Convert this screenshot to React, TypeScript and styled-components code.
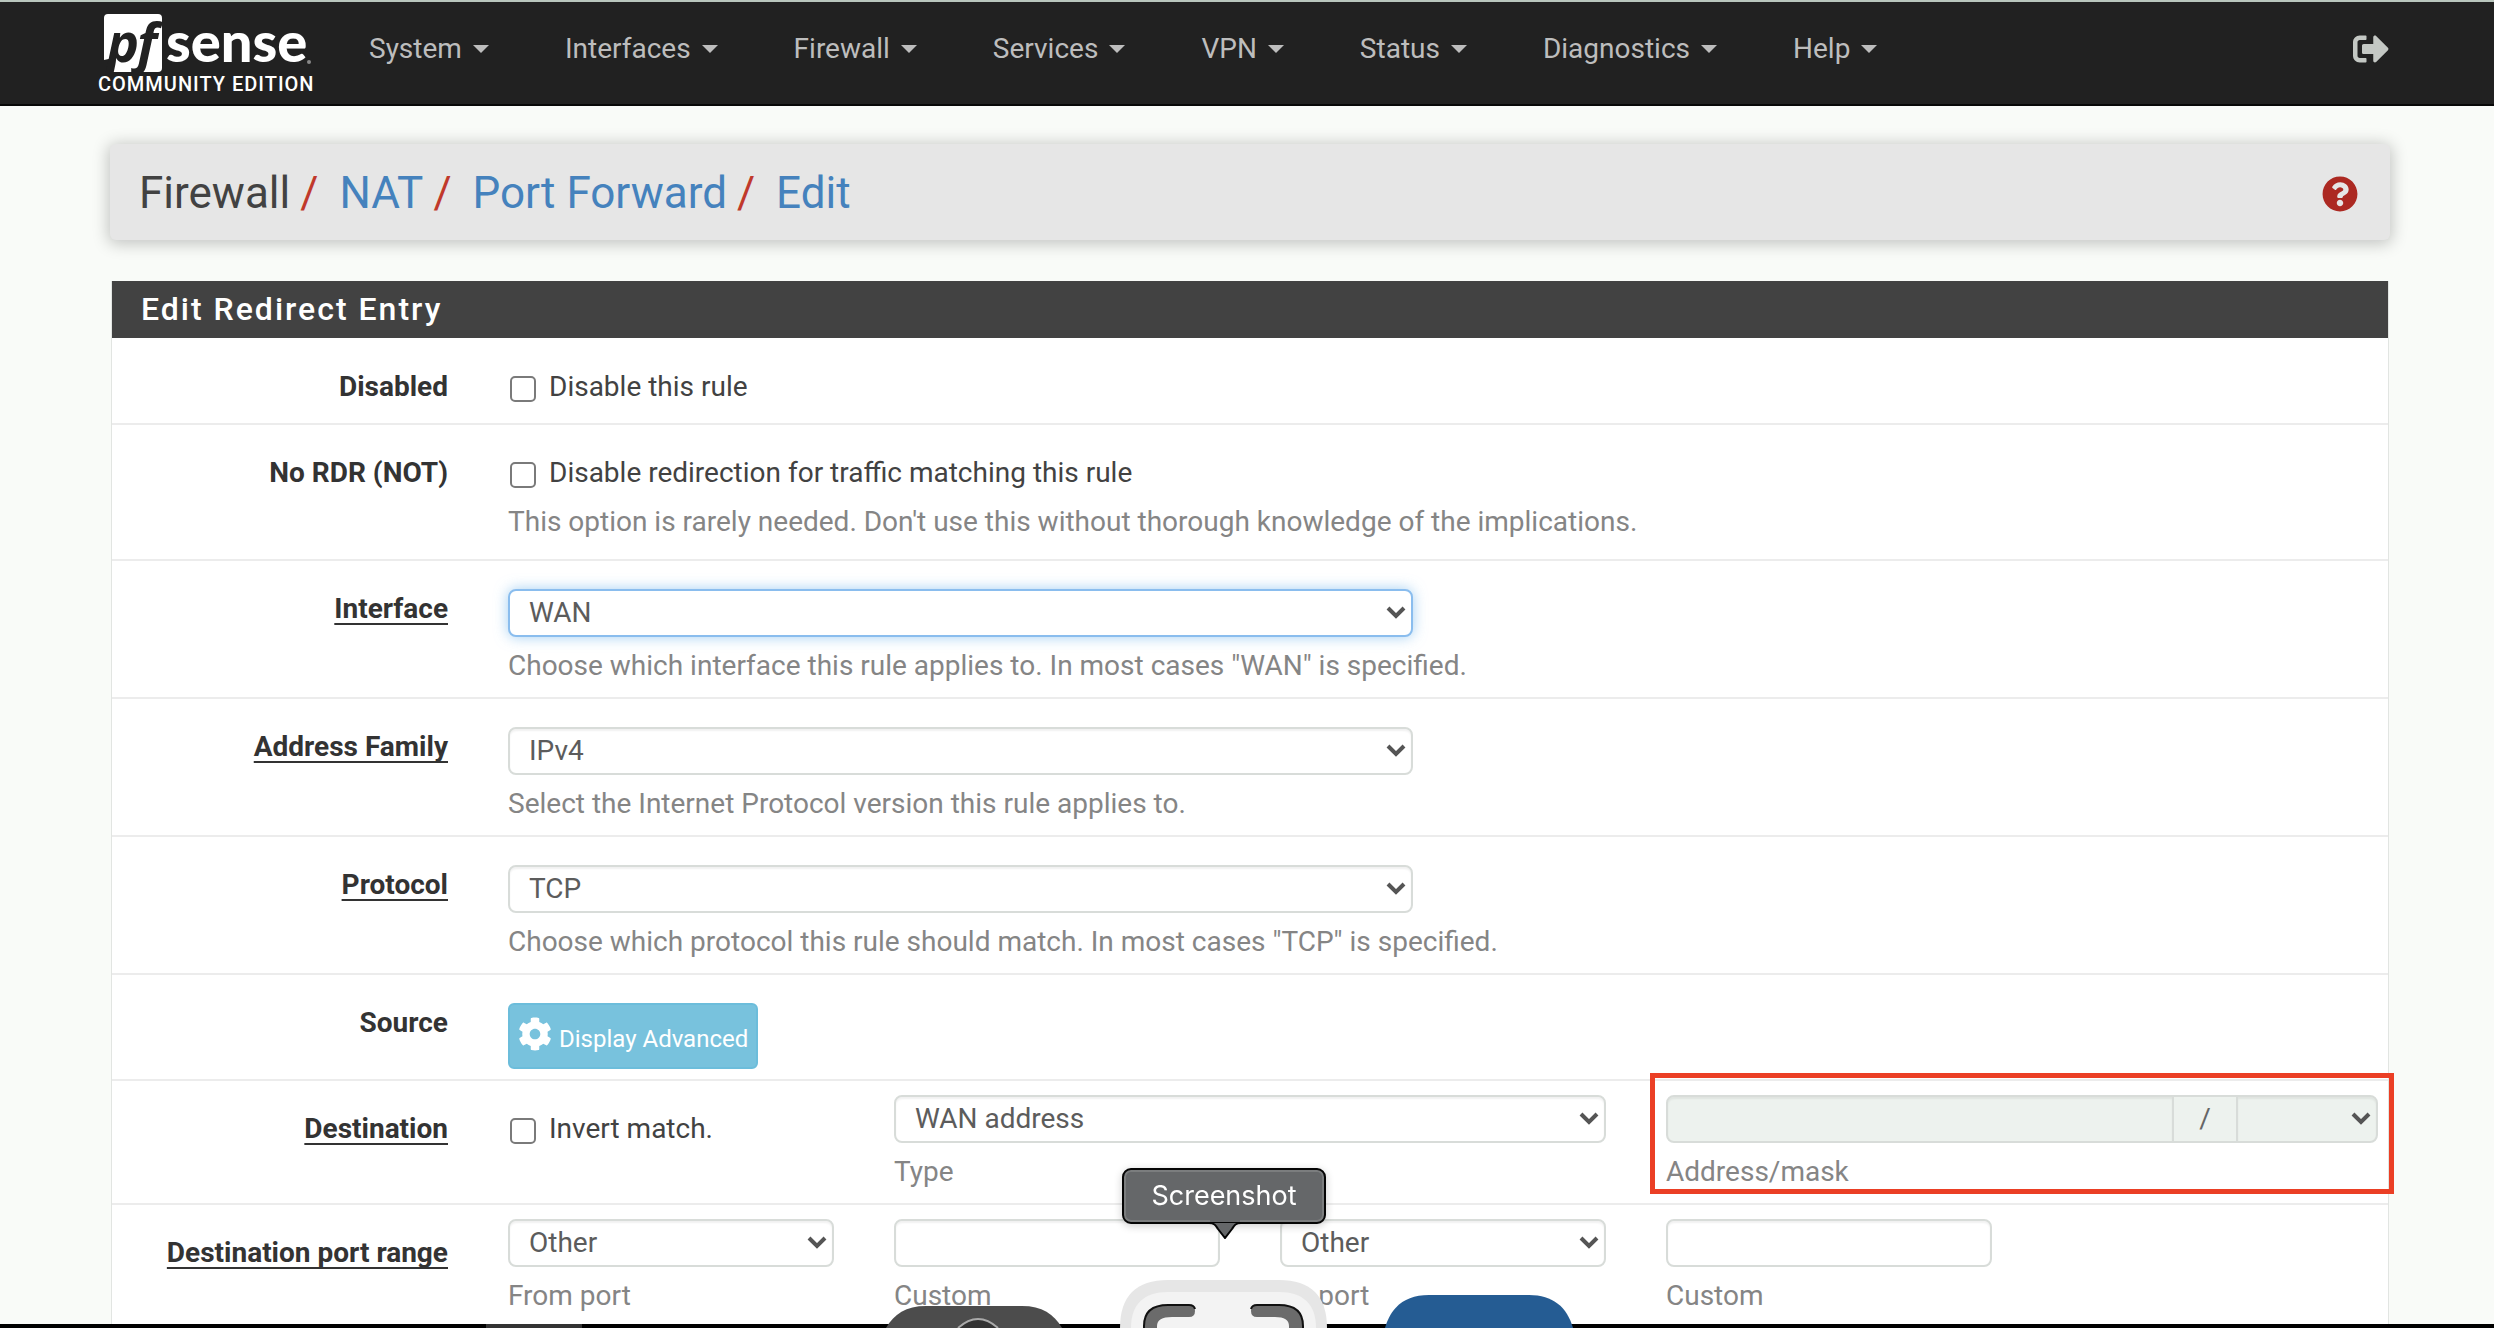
import React, { useId } from 'react';
import styled, { createGlobalStyle, css } from 'styled-components';
import { FaCog, FaQuestionCircle, FaSignOutAlt } from 'react-icons/fa';

const GlobalStyle = createGlobalStyle`
  * { box-sizing: border-box; }
  body {
    margin: 0;
    background: #f9fbf8;
    color: #424242;
    font-family: Roboto, "Liberation Sans", sans-serif;
    font-size: 28px;
    line-height: 40px;
  }
  button, input, select { font: inherit; color: inherit; }
`;

const Page = styled.div`
  height: 100vh;
  overflow: hidden;
`;

const Navbar = styled.nav`
  display: flex;
  height: 106px;
  padding: 0 105px 0 98px;
  border-top: 2px solid #b9c6bd;
  border-bottom: 2px solid #080808;
  background: #212121;
`;

const Brand = styled.a`
  display: flex;
  flex-direction: column;
  width: 233px;
  padding-top: 10px;
  color: #fff;
  font-size: 20px;
  font-weight: 500;
  line-height: 20px;
  letter-spacing: 1px;
  text-decoration: none;
  white-space: nowrap;
`;

const Logo = styled.svg`
  display: block;
  width: 216px;
  height: 62px;
  overflow: visible;
  letter-spacing: 0;
`;

const Menu = styled.ul`
  display: flex;
  flex: 1;
  margin: 0;
  padding: 0;
  list-style: none;
`;

const MenuLink = styled.a`
  display: flex;
  align-items: center;
  gap: 11px;
  height: 94px;
  padding: 0 38px;
  color: #bdbdbd;
  text-decoration: none;

  &::after {
    content: '';
    border: 8px solid transparent;
    border-top-color: currentColor;
    border-bottom: 0;
  }
`;

const Logout = styled.a`
  display: flex;
  align-items: center;
  height: 94px;
  color: #c4c8c4;
  font-size: 36px;
`;

const Container = styled.main`
  padding: 38px 104px 0 110px;
`;

const Crumbs = styled.header`
  display: flex;
  align-items: center;
  justify-content: space-between;
  height: 96px;
  padding: 2px 32px 0 29px;
  border-radius: 6px;
  background: #e6e6e6;
  box-shadow: 0 2px 16px 2px rgba(0, 0, 0, 0.22);
  font-size: 44px;
  line-height: 60px;
`;

const CrumbList = styled.ol`
  display: flex;
  margin: 0;
  padding: 0;
  list-style: none;

  li + li::before {
    content: '/';
    padding: 0 21px 0 10px;
    color: #c0392b;
  }
`;

const CrumbLink = styled.a`
  color: #4582bd;
  text-decoration: none;
`;

const HelpLink = styled.a`
  display: flex;
  padding-top: 2px;
  color: #ac2922;
  font-size: 36px;
`;

const Panel = styled.form`
  margin: 41px 1px 0;
  border: 1px solid #e2e5e2;
  border-top: 0;
  background: #fff;
`;

const PanelTitle = styled.h2`
  margin: 0 0 1px;
  padding: 8px 29px 9px;
  background: #424242;
  color: #fff;
  font-size: 32px;
  font-weight: 500;
  line-height: 40px;
  letter-spacing: 2px;
`;

const RowBox = styled.div<{ $tall?: boolean; $tight?: boolean }>`
  padding: ${p => (p.$tight ? '14px' : '28px')} 0 10px;
  min-height: ${p => (p.$tall ? '136px' : '86px')};
  border-bottom: 2px solid #ececec;
`;

const RowGrid = styled.div`
  display: grid;
  grid-template-columns: repeat(12, minmax(0, 1fr));
  margin: 0 -20px;
`;

const Cell = styled.div<{ $span: number; $drop?: boolean }>`
  position: relative;
  grid-column: span ${p => p.$span};
  padding: 0 30px;
  ${p => p.$drop && css`padding-top: 14px;`}
`;

const LabelCell = styled(Cell)`
  color: #333;
  font-weight: 700;
  text-align: right;
  white-space: nowrap;
`;

const Title = styled.span<{ $required?: boolean }>`
  ${p => p.$required && css`
    text-decoration: underline 2px;
    text-underline-offset: 5px;
    text-decoration-skip-ink: none;
  `}
`;

const controlStyle = css`
  display: block;
  width: 100%;
  height: 48px;
  border: 2px solid #d8dcd9;
  border-radius: 8px;
  background-color: #fff;
  box-shadow: inset 0 2px 2px rgba(0, 0, 0, 0.06);
  color: #5c5c5c;
  outline: 0;

  &:disabled {
    background-color: #edf2ee;
    opacity: 1;
  }
`;

const Select = styled.select<{ $active?: boolean }>`
  ${controlStyle}
  appearance: none;
  padding: 0 40px 0 19px;
  background-image: url("data:image/svg+xml,%3Csvg xmlns='http://www.w3.org/2000/svg' width='20' height='14'%3E%3Cpath d='M2 2l8 8 8-8' fill='none' stroke='%23555' stroke-width='4'/%3E%3C/svg%3E");
  background-repeat: no-repeat;
  background-position: right 5px center;
  ${p => p.$active && css`
    border-color: #8abdee;
    box-shadow: 0 0 14px rgba(102, 175, 233, 0.6);
  `}
`;

const TextInput = styled.input`
  ${controlStyle}
  padding: 0 20px;
`;

const Help = styled.div`
  display: block;
  padding: 9px 0 1px;
  color: #858585;
  white-space: nowrap;
`;

const CheckLabel = styled.label`
  display: flex;
  align-items: center;
  gap: 13px;
  padding-left: 2px;
`;

const Check = styled.input`
  appearance: none;
  width: 26px;
  height: 26px;
  margin: 4px 0 0;
  border: 2px solid #7a7a7a;
  border-radius: 5px;
  background: #fff;
`;

const AdvancedButton = styled.button`
  display: flex;
  align-items: center;
  gap: 7px;
  height: 66px;
  padding: 0 8px;
  border: 2px solid #6cbddb;
  border-radius: 6px;
  background: #78c2dd;
  color: #fff;
  font-size: 24px;
  white-space: nowrap;

  svg { font-size: 34px; margin-bottom: 4px; }
  span { padding-top: 6px; }
`;

const MaskGroup = styled.div`
  display: grid;
  grid-template-columns: 1fr 62px 142px;

  ${TextInput} { border-radius: 8px 0 0 8px; }
  ${Select} { border-radius: 0 8px 8px 0; }
`;

const Slash = styled.span`
  display: flex;
  align-items: center;
  justify-content: center;
  border: solid #d8dcd9;
  border-width: 2px 0;
  background: #edf2ee;
  color: #666;
`;

const Highlight = styled.div`
  position: absolute;
  inset: -22px 14px -1px 14px;
  border: 5px solid #eb3f25;
  pointer-events: none;
`;

const BottomEdge = styled.div`
  position: fixed;
  inset: auto 0 0 0;
  height: 4px;
  padding-left: 486px;
  background: #000;

  &::before {
    content: '';
    display: block;
    width: 96px;
    height: 4px;
    background: #333;
  }
`;

const Dock = styled.div`
  position: fixed;
  bottom: 0;
  left: 886px;
  display: flex;
  align-items: flex-end;
  gap: 58px;
`;

const DockItem = styled.div`
  position: relative;
  svg { display: block; }
`;

const Tooltip = styled.div`
  position: absolute;
  left: 2px;
  bottom: 104px;
  width: 204px;
  height: 56px;
  border: 2px solid #050505;
  border-radius: 9px;
  background: #656769;
  box-shadow: inset 0 0 0 2px #7b7d7e, 0 2px 8px rgba(0, 0, 0, 0.2);
  color: #fff;
  font-family: Inter, sans-serif;
  font-size: 27px;
  line-height: 52px;
  text-align: center;

  svg { position: absolute; left: 84px; top: 49px; }
`;

const menus = ['System', 'Interfaces', 'Firewall', 'Services', 'VPN', 'Status', 'Diagnostics', 'Help'];

function CheckRow({ title, text, help }: { title: string; text: string; help?: string }) {
  const id = useId();
  return (
    <RowBox $tall={!!help}>
      <RowGrid>
        <LabelCell $span={2}><Title as="label" htmlFor={id}>{title}</Title></LabelCell>
        <Cell $span={10}>
          <CheckLabel><Check id={id} type="checkbox" />{text}</CheckLabel>
          {help && <Help>{help}</Help>}
        </Cell>
      </RowGrid>
    </RowBox>
  );
}

function SelectRow({ title, value, help, active }: { title: string; value: string; help: string; active?: boolean }) {
  const id = useId();
  return (
    <RowBox>
      <RowGrid>
        <LabelCell $span={2}><Title as="label" htmlFor={id} $required>{title}</Title></LabelCell>
        <Cell $span={5}>
          <Select id={id} $active={active}><option>{value}</option></Select>
          <Help>{help}</Help>
        </Cell>
      </RowGrid>
    </RowBox>
  );
}

function Field({ span, help, value }: { span: number; help: string; value?: string }) {
  const id = useId();
  return (
    <Cell $span={span}>
      {value ? <Select id={id}><option>{value}</option></Select> : <TextInput id={id} type="text" />}
      <Help as="label" htmlFor={id}>{help}</Help>
    </Cell>
  );
}

export default function App() {
  return (
    <Page>
      <GlobalStyle />
      <Navbar>
        <Brand href="#">
          <Logo viewBox="0 0 216 62" aria-label="pfSense">
            <path d="M10 2H60Q64 2 64 6V56Q64 60 60 60H12L15 46L6 48V6Q6 2 10 2Z" fill="#fff" />
            <g fontFamily="Open Sans, sans-serif" fontStyle="italic" fontWeight="700" fontSize="54" fill="#212121">
              <text x="9" y="50">p</text>
              <text x="39" y="50">f</text>
            </g>
            <text x="68" y="50" fontFamily="Lato, sans-serif" fontWeight="900" fontSize="56" fill="#fff">sense</text>
            <circle cx="211" cy="50" r="2" fill="#888" />
          </Logo>
          COMMUNITY EDITION
        </Brand>
        <Menu>
          {menus.map(m => <li key={m}><MenuLink href="#">{m}</MenuLink></li>)}
        </Menu>
        <Logout href="#" aria-label="Logout"><FaSignOutAlt /></Logout>
      </Navbar>
      <Container>
        <Crumbs>
          <CrumbList>
            <li>Firewall</li>
            {['NAT', 'Port Forward', 'Edit'].map(c => <li key={c}><CrumbLink href="#">{c}</CrumbLink></li>)}
          </CrumbList>
          <HelpLink href="#" aria-label="Help for this page"><FaQuestionCircle /></HelpLink>
        </Crumbs>
        <Panel>
          <PanelTitle>Edit Redirect Entry</PanelTitle>
          <CheckRow title="Disabled" text="Disable this rule" />
          <CheckRow
            title="No RDR (NOT)"
            text="Disable redirection for traffic matching this rule"
            help="This option is rarely needed. Don't use this without thorough knowledge of the implications."
          />
          <SelectRow active title="Interface" value="WAN" help={'Choose which interface this rule applies to. In most cases "WAN" is specified.'} />
          <SelectRow title="Address Family" value="IPv4" help="Select the Internet Protocol version this rule applies to." />
          <SelectRow title="Protocol" value="TCP" help={'Choose which protocol this rule should match. In most cases "TCP" is specified.'} />
          <RowBox>
            <RowGrid>
              <LabelCell $span={2}><Title>Source</Title></LabelCell>
              <Cell $span={10}><AdvancedButton type="button"><FaCog /><span>Display Advanced</span></AdvancedButton></Cell>
            </RowGrid>
          </RowBox>
          <RowBox $tight>
            <RowGrid>
              <LabelCell $span={2} $drop><Title $required>Destination</Title></LabelCell>
              <Cell $span={2} $drop><CheckLabel><Check type="checkbox" />Invert match.</CheckLabel></Cell>
              <Field span={4} value="WAN address" help="Type" />
              <Cell $span={4}>
                <MaskGroup>
                  <TextInput id="address" type="text" disabled />
                  <Slash>/</Slash>
                  <Select aria-label="Mask" disabled />
                </MaskGroup>
                <Help as="label" htmlFor="address">Address/mask</Help>
                <Highlight />
              </Cell>
            </RowGrid>
          </RowBox>
          <RowBox $tight>
            <RowGrid>
              <LabelCell $span={2} $drop><Title $required>Destination port range</Title></LabelCell>
              <Field span={2} value="Other" help="From port" />
              <Field span={2} help="Custom" />
              <Field span={2} value="Other" help="To port" />
              <Field span={2} help="Custom" />
            </RowGrid>
          </RowBox>
        </Panel>
      </Container>
      <BottomEdge />
      <Dock>
        <DockItem>
          <svg width="176" height="22" viewBox="0 0 176 22">
            <path d="M0 22C8 8 20 0 40 0H136C156 0 168 8 176 22Z" fill="#4c4c4c" />
            <path d="M72 22Q92 4 112 22" fill="#333" stroke="#aaa" strokeWidth="2" />
          </svg>
        </DockItem>
        <DockItem>
          <svg width="207" height="48" viewBox="0 0 207 48">
            <path d="M0 48C0 16 16 0 48 0H159C191 0 207 16 207 48Z" fill="#e6e6e6" />
            <path d="M11 48C11 24 24 12 48 12H159C183 12 196 24 196 48Z" fill="#f3f3f3" />
            <path d="M24 48V46Q24 25 48 25H69Q75 25 75 31T69 37H52Q37 37 37 46V48ZM183 48V46Q183 25 159 25H137Q131 25 131 31T137 37H155Q169 37 169 46V48Z" fill="#6b6b6b" />
            <path d="M24 48V46Q24 25 48 25H69Q74 25 75 29M183 48V46Q183 25 159 25H137Q132 25 131 29" fill="none" stroke="#111" strokeWidth="2" />
          </svg>
          <Tooltip>
            Screenshot
            <svg width="34" height="20" viewBox="0 0 34 20">
              <path d="M1 4C7 4 8 7 10 10L17 19L24 10C26 7 27 4 33 4" fill="#656769" stroke="#050505" strokeWidth="2" />
              <path d="M2 0H32V3H2Z" fill="#656769" />
            </svg>
          </Tooltip>
        </DockItem>
        <DockItem>
          <svg width="188" height="33" viewBox="0 0 188 33">
            <path d="M0 33C6 12 20 0 44 0H144C168 0 182 12 188 33Z" fill="#255c93" />
          </svg>
        </DockItem>
      </Dock>
    </Page>
  );
}
